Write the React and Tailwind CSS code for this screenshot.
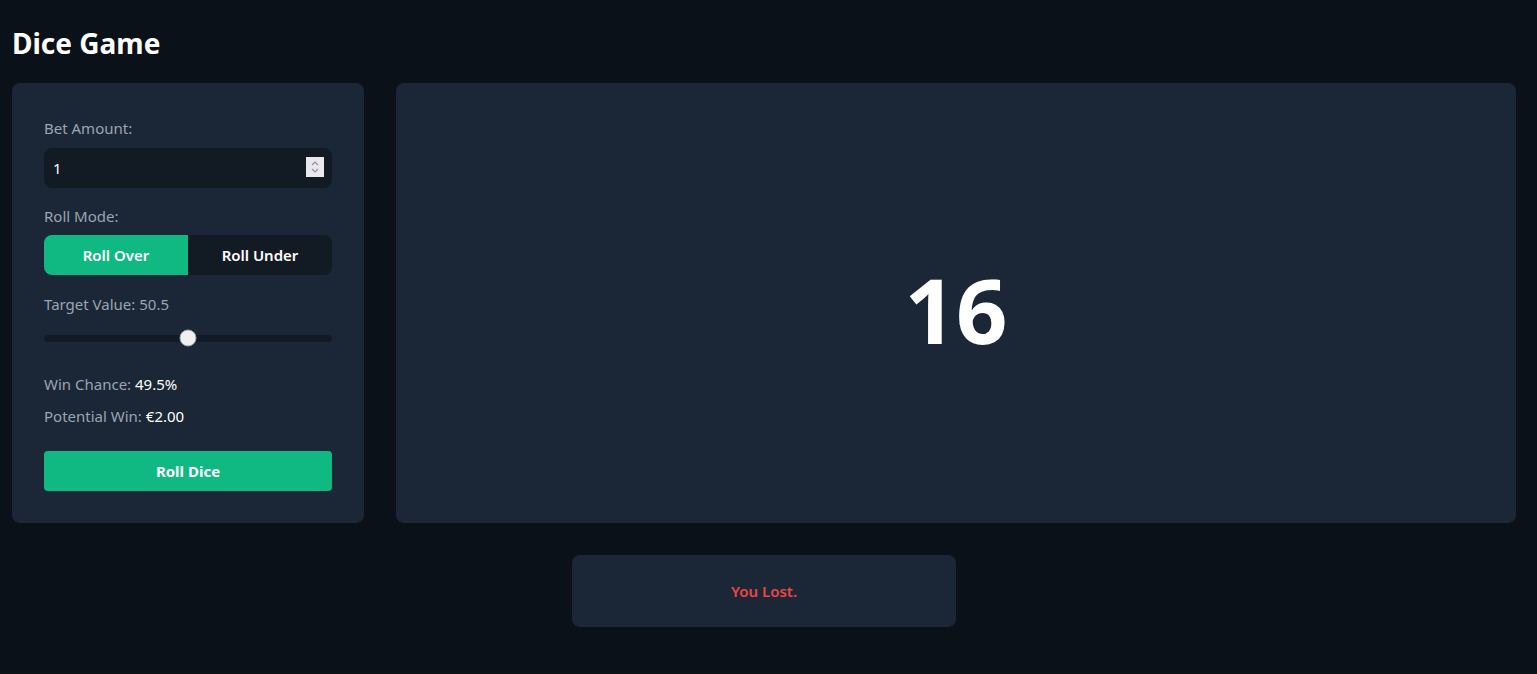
import { useState } from 'react';

export default function App() {
  const [bet, setBet] = useState(1);
  const [mode, setMode] = useState('over');
  const [target, setTarget] = useState(50.5);
  const [roll, setRoll] = useState(16);
  const [result, setResult] = useState('lost');

  const winChance = mode === 'over' ? 100 - target : target - 1;
  const potential = (bet * 2).toFixed(2);
  const pct = ((target - 1) / 99) * 100;

  const rollDice = () => {
    const n = Math.floor(Math.random() * 100) + 1;
    setRoll(n);
    const won = mode === 'over' ? n > target : n < target;
    setResult(won ? 'won' : 'lost');
  };

  return (
    <div className="min-h-screen bg-[#0b1119] text-white pl-3 pr-[21px] pt-[25px] pb-10 font-['Noto_Sans',sans-serif]">
      <h1 className="text-[28px] leading-9 font-bold mb-[22px]">Dice Game</h1>

      <div className="flex gap-8 items-stretch">
        {/* Controls */}
        <div className="w-[352px] shrink-0 bg-[#1b2736] rounded-lg px-8 pt-[33px] pb-8">
          <label className="block text-[15px] leading-6 text-[#9aa4b2] mb-2">Bet Amount:</label>
          <div className="relative">
            <input
              type="number"
              value={bet}
              onChange={e => setBet(Number(e.target.value))}
              className="w-full h-10 bg-[#121b24] rounded-lg px-[9px] text-[15px] text-white outline-none [appearance:textfield] [&::-webkit-inner-spin-button]:appearance-none"
            />
            {/* spinner */}
            <div className="absolute right-[8px] top-[9px] w-[18px] h-[20px] bg-[#e9e9ed] flex flex-col items-center justify-center">
              <svg width="10" height="16" viewBox="0 0 10 16" fill="none" stroke="#8f8f9d" strokeWidth="1.2">
                <path d="M2 6 L5 3 L8 6" />
                <path d="M2 10 L5 13 L8 10" />
              </svg>
            </div>
          </div>

          <label className="block text-[15px] leading-6 text-[#9aa4b2] mt-4 mb-[7px]">Roll Mode:</label>
          <div className="flex bg-[#121b24] rounded-lg overflow-hidden">
            <button
              onClick={() => setMode('over')}
              className={mode === 'over' ? "flex-1 h-10 bg-[#10b981] text-white text-[15px] font-semibold" : "flex-1 h-10 text-white text-[15px] font-semibold"}
            >
              Roll Over
            </button>
            <button
              onClick={() => setMode('under')}
              className={mode === 'under' ? "flex-1 h-10 bg-[#10b981] text-white text-[15px] font-semibold" : "flex-1 h-10 text-white text-[15px] font-semibold"}
            >
              Roll Under
            </button>
          </div>

          <label className="block text-[15px] leading-6 text-[#9aa4b2] mt-[17px]">Target Value: {target}</label>
          <div className="relative h-[36px] mt-1 flex items-center">
            <div className="w-full h-[7px] rounded-full bg-[#121b24]" />
            <div
              className="absolute top-1/2 -translate-y-1/2 -translate-x-1/2 w-[17px] h-[17px] rounded-full bg-[#f0f0f0] border border-[#a0a4ab]"
              style={{ left: `${pct}%` }}
            />
          </div>

          <div className="mt-4 text-[15px] leading-6 text-[#9aa4b2]">
            Win Chance: <span className="text-white">{winChance}%</span>
          </div>
          <div className="mt-2 text-[15px] leading-6 text-[#9aa4b2]">
            Potential Win: <span className="text-white">€{potential}</span>
          </div>

          <button
            onClick={rollDice}
            className="mt-[23px] w-full h-10 bg-[#10b981] rounded text-white text-[15px] font-bold"
          >
            Roll Dice
          </button>
        </div>

        {/* Dice display */}
        <div className="flex-1 bg-[#1b2736] rounded-lg flex items-center justify-center pt-3">
          <span className="text-[90px] leading-none font-bold">{roll}</span>
        </div>
      </div>

      <div className="mt-8 mx-auto w-96 bg-[#1b2736] rounded-lg py-6 text-center">
        <p className={result === 'lost' ? "text-[15px] leading-6 font-semibold text-[#ef4444]" : "text-[15px] leading-6 font-semibold text-[#10b981]"}>
          {result === 'lost' ? 'You Lost.' : 'You Won!'}
        </p>
      </div>
    </div>
  );
}
